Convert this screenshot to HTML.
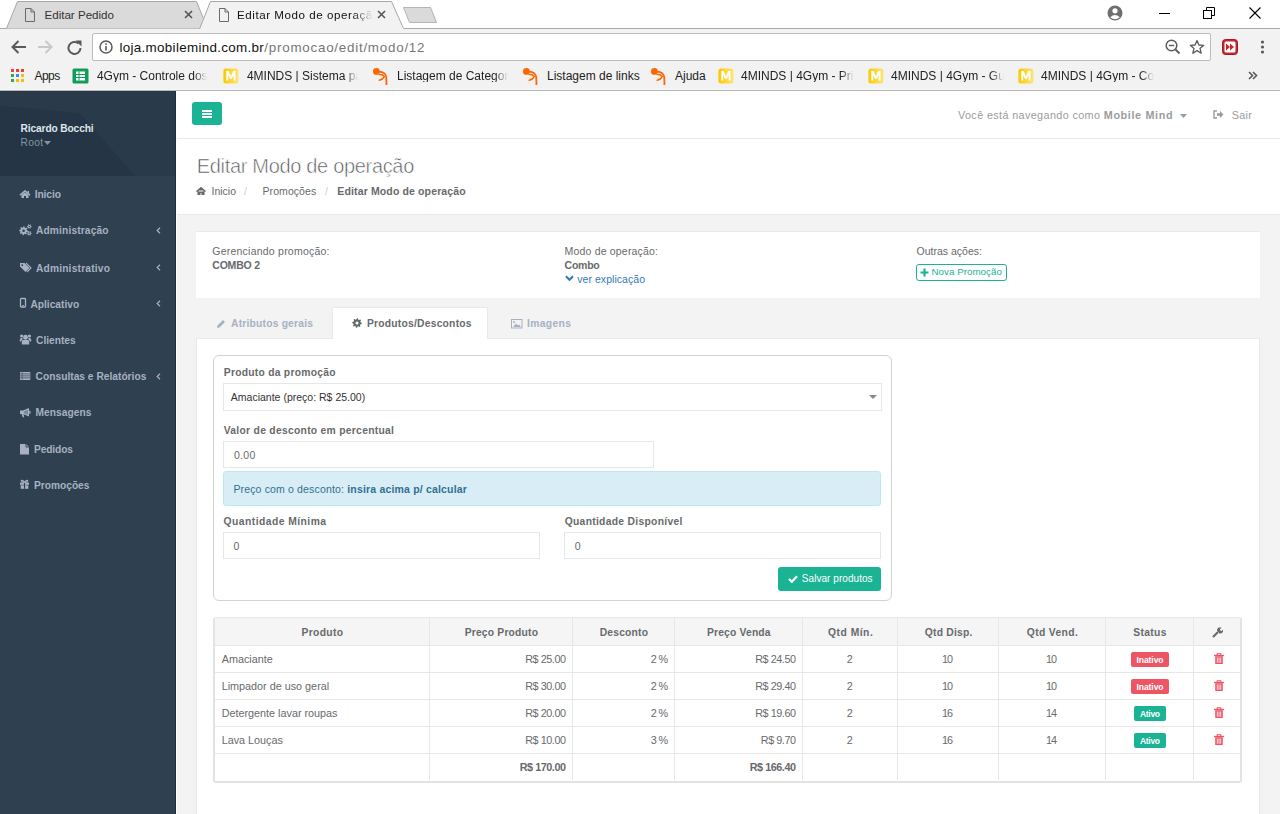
<!DOCTYPE html><html><head><meta charset="utf-8"><style>
html,body{margin:0;padding:0;width:1280px;height:814px;overflow:hidden;background:#fff;position:relative}
.t{position:absolute;white-space:nowrap;line-height:1;font-family:"Liberation Sans",sans-serif}
.r{position:absolute;display:block}
</style></head><body>
<div class="r" style="left:0px;top:0px;width:1280px;height:29px;background:#fff"></div>
<div class="r" style="left:0px;top:28px;width:1280px;height:62px;background:#f2f2f2"></div>
<div class="r" style="left:0px;top:28px;width:199px;height:1px;background:#a9a9a9"></div>
<div class="r" style="left:404px;top:28px;width:876px;height:1px;background:#a9a9a9"></div>
<svg class="r" style="left:0px;top:0px;" width="440" height="30" viewBox="0 0 440 30"><path d="M6.5 28.5 L17.5 1.5 L196.5 1.5 L207.5 28.5" fill="#dadada" stroke="#a7a7a7"/><path d="M199.5 29 L210.5 1.5 L391.5 1.5 L403.5 28.5" fill="#f2f2f2" stroke="#a7a7a7"/><rect x="205" y="28" width="193" height="2" fill="#f2f2f2"/><path d="M403.5 7.5 L430.5 7.5 L436.5 22.5 L409.5 22.5 Z" fill="#dadada" stroke="#b4b4b4"/></svg>
<svg class="r" style="left:25px;top:8px;" width="11" height="15" viewBox="0 0 11 15"><path d="M0.5 0.5 H6 L9.5 4 V13.5 H0.5 Z M6 0.5 V4 H9.5" fill="none" stroke="#6a6a6a" stroke-width="1"/></svg>
<svg class="r" style="left:219px;top:8px;" width="11" height="15" viewBox="0 0 11 15"><path d="M0.5 0.5 H6 L9.5 4 V13.5 H0.5 Z M6 0.5 V4 H9.5" fill="none" stroke="#6a6a6a" stroke-width="1"/></svg>
<div class="t" style="left:44.50px;top:8.98px;font-size:11.6px;color:#333;font-weight:normal;letter-spacing:-0.012px;">Editar Pedido</div>
<div class="t" style="left:237px;top:8px;font-size:11.6px;line-height:14px;color:#111;width:136px;letter-spacing:0.55px;overflow:hidden;white-space:nowrap;-webkit-mask-image:linear-gradient(90deg,#000 85%,transparent)">Editar Modo de operação</div>
<svg class="r" style="left:184px;top:10px;" width="9" height="9" viewBox="0 0 9 9"><path d="M1 1 L8 8 M8 1 L1 8" stroke="#555" stroke-width="1.6"/></svg>
<svg class="r" style="left:377px;top:10px;" width="9" height="9" viewBox="0 0 9 9"><path d="M1 1 L8 8 M8 1 L1 8" stroke="#555" stroke-width="1.6"/></svg>
<svg class="r" style="left:1107px;top:5px;" width="17" height="17" viewBox="0 0 17 17"><circle cx="8" cy="8" r="7.5" fill="#6f6f6f"/><circle cx="8" cy="5.8" r="2.6" fill="#fff"/><path d="M3.2 12.3 Q8 7.6 12.8 12.3 Q8 16 3.2 12.3Z" fill="#fff"/></svg>
<div class="r" style="left:1159px;top:13px;width:11px;height:1px;background:#000"></div>
<svg class="r" style="left:1203px;top:7px;" width="12" height="12" viewBox="0 0 12 12"><rect x="0.5" y="3.5" width="8" height="8" fill="none" stroke="#000"/><path d="M3.5 3.5 V0.5 H11.5 V8.5 H8.5" fill="none" stroke="#000"/></svg>
<svg class="r" style="left:1249px;top:7px;" width="12" height="12" viewBox="0 0 12 12"><path d="M0.5 0.5 L11.5 11.5 M11.5 0.5 L0.5 11.5" stroke="#000" stroke-width="1.1"/></svg>
<svg class="r" style="left:10px;top:39px;" width="18" height="16" viewBox="0 0 18 16"><path d="M16 8 H2.5 M8.5 2 L2.5 8 L8.5 14" fill="none" stroke="#5a5a5a" stroke-width="2"/></svg>
<svg class="r" style="left:36px;top:39px;" width="18" height="16" viewBox="0 0 18 16"><path d="M2 8 H15.5 M9.5 2 L15.5 8 L9.5 14" fill="none" stroke="#c8c8c8" stroke-width="2"/></svg>
<svg class="r" style="left:65.5px;top:38.5px;" width="18" height="18" viewBox="0 0 18 18"><path d="M14.5 9 A6 6 0 1 1 12.6 4.6" fill="none" stroke="#5a5a5a" stroke-width="2"/><path d="M9.5 1.5 H15.5 V7.5 Z" fill="#5a5a5a"/></svg>
<div class="r" style="left:92px;top:33px;width:1119px;height:28px;background:#fff;border:1px solid #bdbdbd;border-radius:2px;box-sizing:border-box"></div>
<svg class="r" style="left:99px;top:40px;" width="14" height="14" viewBox="0 0 14 14"><circle cx="7" cy="7" r="6" fill="none" stroke="#5a5a5a" stroke-width="1.5"/><rect x="6.2" y="6" width="1.6" height="4.5" fill="#5a5a5a"/><rect x="6.2" y="3.3" width="1.6" height="1.6" fill="#5a5a5a"/></svg>
<div class="t" style="left:119.50px;top:41.15px;font-size:13.4px;color:#111;font-weight:normal;letter-spacing:0.310px;">loja.mobilemind.com.br</div>
<div class="t" style="left:264.30px;top:41.15px;font-size:13.4px;color:#767676;font-weight:normal;letter-spacing:0.752px;">/promocao/edit/modo/12</div>
<svg class="r" style="left:1165px;top:39px;" width="16" height="16" viewBox="0 0 16 16"><circle cx="6.5" cy="6.5" r="5.3" fill="none" stroke="#5a5a5a" stroke-width="1.5"/><path d="M10.5 10.5 L14.5 14.5" stroke="#5a5a5a" stroke-width="1.8"/><path d="M3.8 6.5 H9.2" stroke="#5a5a5a" stroke-width="1.4"/></svg>
<svg class="r" style="left:1189px;top:39px;" width="16" height="16" viewBox="0 0 16 16"><path d="M8 1.5 L9.9 6 L14.7 6.3 L11 9.4 L12.2 14.2 L8 11.6 L3.8 14.2 L5 9.4 L1.3 6.3 L6.1 6 Z" fill="none" stroke="#5a5a5a" stroke-width="1.3" stroke-linejoin="round"/></svg>
<svg class="r" style="left:1222px;top:39px;" width="16" height="16" viewBox="0 0 16 16"><rect x="0.5" y="0.5" width="15" height="15" rx="3" fill="#c8242b" stroke="#a31a20"/><rect x="2.5" y="2.5" width="11" height="11" rx="1.5" fill="#fff"/><path d="M4 4.5 L8 8 L4 11.5Z M8 4.5 L12 8 L8 11.5Z" fill="#c8242b"/></svg>
<svg class="r" style="left:1260px;top:40px;" width="5" height="14" viewBox="0 0 5 14"><circle cx="2.5" cy="2" r="1.6" fill="#5a5a5a"/><circle cx="2.5" cy="7" r="1.6" fill="#5a5a5a"/><circle cx="2.5" cy="12" r="1.6" fill="#5a5a5a"/></svg>
<svg class="r" style="left:10px;top:68px;" width="15" height="15" viewBox="0 0 15 15"><rect x="1" y="1" width="3" height="3" fill="#ea4335"/><rect x="6" y="1" width="3" height="3" fill="#ea4335"/><rect x="11" y="1" width="3" height="3" fill="#ea4335"/><rect x="1" y="6" width="3" height="3" fill="#34a853"/><rect x="6" y="6" width="3" height="3" fill="#4285f4"/><rect x="11" y="6" width="3" height="3" fill="#fbbc05"/><rect x="1" y="11" width="3" height="3" fill="#34a853"/><rect x="6" y="11" width="3" height="3" fill="#fbbc05"/><rect x="11" y="11" width="3" height="3" fill="#fbbc05"/></svg>
<div class="t" style="left:34.40px;top:70.34px;font-size:12px;color:#222;font-weight:normal;letter-spacing:-0.484px;">Apps</div>
<svg class="r" style="left:72px;top:68px;" width="17" height="16" viewBox="0 0 17 16"><rect x="0.5" y="0.5" width="16" height="15" rx="1.5" fill="#0f9d58"/><rect x="4" y="3.5" width="9" height="9" fill="#fff"/><path d="M4 6.5 H13 M4 9.5 H13 M7 3.5 V12.5" stroke="#0f9d58" stroke-width="1"/></svg>
<svg class="r" style="left:223px;top:68px;" width="17" height="17" viewBox="0 0 17 17"><defs><linearGradient id="yg" x1="0" x2="1"><stop offset="0" stop-color="#fbc900"/><stop offset="1" stop-color="#fde47a"/></linearGradient></defs><rect x="0.4" y="0.4" width="15" height="15" rx="2.5" fill="url(#yg)"/><path d="M3.3 12.6 V3 H5.6 L7.9 8.3 L10.2 3 H12.5 V12.6 H10.6 V7 L8.7 11 H7.1 L5.2 7 V12.6Z" fill="#fff"/></svg>
<div class="t" style="left:246.9px;top:70.34px;font-size:12px;color:#222;width:111px;-webkit-mask-image:linear-gradient(90deg,#000 88%,transparent);overflow:hidden;white-space:nowrap;">4MINDS | Sistema para</div>
<div class="t" style="left:96.9px;top:70.34px;font-size:12px;color:#222;width:110px;-webkit-mask-image:linear-gradient(90deg,#000 88%,transparent);overflow:hidden;white-space:nowrap;">4Gym - Controle dos clientes</div>
<svg class="r" style="left:372px;top:68px;" width="17" height="17" viewBox="0 0 17 17"><circle cx="4.4" cy="3.4" r="3.4" fill="#ff6600"/><path d="M7 3.6 Q13.5 4 14.2 9 Q14.5 13 14.4 16.5" fill="none" stroke="#ff6600" stroke-width="1.8" stroke-linecap="round"/><path d="M7.2 6.6 Q11 6.3 12.3 8.6 Q10.8 11.5 7.2 12.2" fill="none" stroke="#ff6600" stroke-width="1.5" stroke-linecap="round"/></svg>
<div class="t" style="left:397px;top:70.34px;font-size:12px;color:#222;width:111px;-webkit-mask-image:linear-gradient(90deg,#000 88%,transparent);overflow:hidden;white-space:nowrap;">Listagem de Categorias</div>
<svg class="r" style="left:522px;top:68px;" width="17" height="17" viewBox="0 0 17 17"><circle cx="4.4" cy="3.4" r="3.4" fill="#ff6600"/><path d="M7 3.6 Q13.5 4 14.2 9 Q14.5 13 14.4 16.5" fill="none" stroke="#ff6600" stroke-width="1.8" stroke-linecap="round"/><path d="M7.2 6.6 Q11 6.3 12.3 8.6 Q10.8 11.5 7.2 12.2" fill="none" stroke="#ff6600" stroke-width="1.5" stroke-linecap="round"/></svg>
<div class="t" style="left:547px;top:70.34px;font-size:12px;color:#222;width:98px;">Listagem de links</div>
<svg class="r" style="left:650px;top:68px;" width="17" height="17" viewBox="0 0 17 17"><circle cx="4.4" cy="3.4" r="3.4" fill="#ff6600"/><path d="M7 3.6 Q13.5 4 14.2 9 Q14.5 13 14.4 16.5" fill="none" stroke="#ff6600" stroke-width="1.8" stroke-linecap="round"/><path d="M7.2 6.6 Q11 6.3 12.3 8.6 Q10.8 11.5 7.2 12.2" fill="none" stroke="#ff6600" stroke-width="1.5" stroke-linecap="round"/></svg>
<div class="t" style="left:675px;top:70.34px;font-size:12px;color:#222;width:32px;">Ajuda</div>
<svg class="r" style="left:718px;top:68px;" width="17" height="17" viewBox="0 0 17 17"><defs><linearGradient id="yg" x1="0" x2="1"><stop offset="0" stop-color="#fbc900"/><stop offset="1" stop-color="#fde47a"/></linearGradient></defs><rect x="0.4" y="0.4" width="15" height="15" rx="2.5" fill="url(#yg)"/><path d="M3.3 12.6 V3 H5.6 L7.9 8.3 L10.2 3 H12.5 V12.6 H10.6 V7 L8.7 11 H7.1 L5.2 7 V12.6Z" fill="#fff"/></svg>
<div class="t" style="left:741px;top:70.34px;font-size:12px;color:#222;width:113px;-webkit-mask-image:linear-gradient(90deg,#000 88%,transparent);overflow:hidden;white-space:nowrap;">4MINDS | 4Gym - Primeiro</div>
<svg class="r" style="left:868px;top:68px;" width="17" height="17" viewBox="0 0 17 17"><defs><linearGradient id="yg" x1="0" x2="1"><stop offset="0" stop-color="#fbc900"/><stop offset="1" stop-color="#fde47a"/></linearGradient></defs><rect x="0.4" y="0.4" width="15" height="15" rx="2.5" fill="url(#yg)"/><path d="M3.3 12.6 V3 H5.6 L7.9 8.3 L10.2 3 H12.5 V12.6 H10.6 V7 L8.7 11 H7.1 L5.2 7 V12.6Z" fill="#fff"/></svg>
<div class="t" style="left:891px;top:70.34px;font-size:12px;color:#222;width:113px;-webkit-mask-image:linear-gradient(90deg,#000 88%,transparent);overflow:hidden;white-space:nowrap;">4MINDS | 4Gym - Guia</div>
<svg class="r" style="left:1018px;top:68px;" width="17" height="17" viewBox="0 0 17 17"><defs><linearGradient id="yg" x1="0" x2="1"><stop offset="0" stop-color="#fbc900"/><stop offset="1" stop-color="#fde47a"/></linearGradient></defs><rect x="0.4" y="0.4" width="15" height="15" rx="2.5" fill="url(#yg)"/><path d="M3.3 12.6 V3 H5.6 L7.9 8.3 L10.2 3 H12.5 V12.6 H10.6 V7 L8.7 11 H7.1 L5.2 7 V12.6Z" fill="#fff"/></svg>
<div class="t" style="left:1041px;top:70.34px;font-size:12px;color:#222;width:113px;-webkit-mask-image:linear-gradient(90deg,#000 88%,transparent);overflow:hidden;white-space:nowrap;">4MINDS | 4Gym - Como</div>
<svg class="r" style="left:1248px;top:71px;" width="10" height="9" viewBox="0 0 10 9"><path d="M1 1 L4.5 4.5 L1 8 M5 1 L8.5 4.5 L5 8" fill="none" stroke="#5a5a5a" stroke-width="1.6"/></svg>
<div class="r" style="left:0px;top:89px;width:1280px;height:1px;background:#f7f7f7"></div>
<div class="r" style="left:0px;top:90px;width:1280px;height:1px;background:#b6b6b6"></div>
<div class="r" style="left:0px;top:91px;width:176px;height:723px;background:#2f4050"></div>
<svg class="r" style="left:0px;top:91px;" width="176" height="85" viewBox="0 0 176 85"><rect width="176" height="85" fill="#283848"/><path d="M0 15 Q40 18 80 22 L135 85 L0 85Z" fill="#253545"/><path d="M80 22 L95 0 L176 0 L176 85 L135 85Z" fill="#293a4a"/><path d="M0 0 H95 L80 22 Q40 18 0 15Z" fill="#2a3a4a"/></svg>
<div class="r" style="left:175px;top:91px;width:1px;height:723px;background:#1f2d3b"></div>
<div class="t" style="left:20.60px;top:124.16px;font-size:10.2px;color:#dfe4ed;font-weight:bold;letter-spacing:-0.132px;">Ricardo Bocchi</div>
<div class="t" style="left:20.60px;top:138.26px;font-size:10.2px;color:#8095a8;font-weight:normal;letter-spacing:0.285px;">Root</div>
<svg class="r" style="left:44px;top:141px;" width="7" height="4" viewBox="0 0 7 4"><path d="M0 0 H7 L3.5 4Z" fill="#8095a8"/></svg>
<div class="t" style="left:34.70px;top:190.16px;font-size:10.2px;color:#a7b1c2;font-weight:bold;letter-spacing:-0.067px;">Inicio</div>
<svg class="r" style="left:19px;top:190px;" width="12" height="9" viewBox="0 0 12 9"><path d="M1 5.2 L6 1 L11 5.2" fill="none" stroke="#a7b1c2" stroke-width="1.6"/><path d="M8.5 1 H10 V3.5 L8.5 2.3Z" fill="#a7b1c2"/><path d="M2.5 5 L6 2.2 L9.5 5 V8 H7 V6 H5 V8 H2.5Z" fill="#a7b1c2"/></svg>
<div class="t" style="left:36.00px;top:226.36px;font-size:10.2px;color:#a7b1c2;font-weight:bold;letter-spacing:0.146px;">Administração</div>
<svg class="r" style="left:19px;top:224px;" width="13" height="12" viewBox="0 0 13 12"><polygon points="9.10,6.80 9.01,7.68 7.65,8.06 7.34,8.63 7.78,9.98 7.10,10.54 5.86,9.85 5.24,10.04 4.60,11.30 3.72,11.21 3.34,9.85 2.77,9.54 1.42,9.98 0.86,9.30 1.55,8.06 1.36,7.44 0.10,6.80 0.19,5.92 1.55,5.54 1.86,4.97 1.42,3.62 2.10,3.06 3.34,3.75 3.96,3.56 4.60,2.30 5.48,2.39 5.86,3.75 6.43,4.06 7.78,3.62 8.34,4.30 7.65,5.54 7.84,6.16" fill="#a7b1c2"/><circle cx="4.6" cy="6.8" r="1.3" fill="#2f4050"/><polygon points="12.70,2.50 12.62,3.12 11.69,3.30 11.43,3.63 11.50,4.58 10.92,4.82 10.30,4.10 9.89,4.05 9.10,4.58 8.60,4.20 8.91,3.30 8.75,2.91 7.90,2.50 7.98,1.88 8.91,1.70 9.17,1.37 9.10,0.42 9.68,0.18 10.30,0.90 10.71,0.95 11.50,0.42 12.00,0.80 11.69,1.70 11.85,2.09" fill="#a7b1c2"/><circle cx="10.3" cy="2.5" r="0.7" fill="#2f4050"/><polygon points="12.70,9.30 12.62,9.92 11.69,10.10 11.43,10.43 11.50,11.38 10.92,11.62 10.30,10.90 9.89,10.85 9.10,11.38 8.60,11.00 8.91,10.10 8.75,9.71 7.90,9.30 7.98,8.68 8.91,8.50 9.17,8.17 9.10,7.22 9.68,6.98 10.30,7.70 10.71,7.75 11.50,7.22 12.00,7.60 11.69,8.50 11.85,8.89" fill="#a7b1c2"/><circle cx="10.3" cy="9.3" r="0.7" fill="#2f4050"/></svg>
<div class="t" style="left:35.90px;top:263.76px;font-size:10.2px;color:#a7b1c2;font-weight:bold;letter-spacing:0.207px;">Administrativo</div>
<svg class="r" style="left:19px;top:262px;" width="13" height="11" viewBox="0 0 13 11"><path d="M1 1 H5.5 L10.5 6 L6.5 10 L1 4.5Z" fill="#a7b1c2"/><circle cx="3.2" cy="3.2" r="0.9" fill="#2f4050"/><path d="M7 1 L12 6 L8 10" fill="none" stroke="#a7b1c2" stroke-width="1.1"/></svg>
<div class="t" style="left:30.40px;top:299.66px;font-size:10.2px;color:#a7b1c2;font-weight:bold;letter-spacing:0.006px;">Aplicativo</div>
<svg class="r" style="left:19px;top:297px;" width="8" height="11" viewBox="0 0 8 11"><rect x="1.5" y="1.5" width="5" height="8.5" rx="0.8" fill="none" stroke="#a7b1c2" stroke-width="1.3"/><rect x="3" y="8.2" width="2" height="1" fill="#a7b1c2"/></svg>
<div class="t" style="left:36.10px;top:335.56px;font-size:10.2px;color:#a7b1c2;font-weight:bold;letter-spacing:-0.011px;">Clientes</div>
<svg class="r" style="left:19px;top:333px;" width="13" height="12" viewBox="0 0 13 12"><circle cx="6.5" cy="4.2" r="2.4" fill="#a7b1c2"/><circle cx="2.6" cy="3" r="1.6" fill="#a7b1c2"/><circle cx="10.4" cy="3" r="1.6" fill="#a7b1c2"/><path d="M2.8 11.5 V9 Q2.8 6.6 6.5 6.6 Q10.2 6.6 10.2 9 V11.5Z" fill="#a7b1c2"/><path d="M0.8 8.5 V6.5 Q0.8 5 2.6 5 Q3.8 5 4.3 5.8 Q2.5 6.5 2.3 8.5Z M12.2 8.5 V6.5 Q12.2 5 10.4 5 Q9.2 5 8.7 5.8 Q10.5 6.5 10.7 8.5Z" fill="#a7b1c2"/></svg>
<div class="t" style="left:35.60px;top:372.16px;font-size:10.2px;color:#a7b1c2;font-weight:bold;letter-spacing:0.018px;">Consultas e Relatórios</div>
<svg class="r" style="left:19px;top:371px;" width="12" height="10" viewBox="0 0 12 10"><rect x="1" y="1" width="10.3" height="8" fill="#a7b1c2"/><path d="M1 2.9 H11.3 M1 4.9 H11.3 M1 6.9 H11.3" stroke="#2f4050" stroke-width="0.7"/><path d="M3.2 1 V9" stroke="#2f4050" stroke-width="0.5"/></svg>
<div class="t" style="left:35.40px;top:408.36px;font-size:10.2px;color:#a7b1c2;font-weight:bold;letter-spacing:0.081px;">Mensagens</div>
<svg class="r" style="left:19px;top:407px;" width="12" height="11" viewBox="0 0 12 11"><path d="M1 3.5 H4 L10 1 V9.5 L4 7 H1Z" fill="#a7b1c2"/><path d="M2.5 7 L3.7 10.3 H5.2 L4.6 7.2Z" fill="#a7b1c2"/><rect x="10.2" y="3.8" width="1.3" height="3" fill="#a7b1c2"/><path d="M5 4.3 L9 2.8 V7.7 L5 6.2Z" fill="#2f4050" opacity="0.35"/></svg>
<div class="t" style="left:34.00px;top:445.36px;font-size:10.2px;color:#a7b1c2;font-weight:bold;letter-spacing:-0.113px;">Pedidos</div>
<svg class="r" style="left:19px;top:443px;" width="11" height="12" viewBox="0 0 11 12"><path d="M1 1 H7 L10 4 V11.6 H1Z" fill="#a7b1c2"/><path d="M7 1 V4 H10" fill="none" stroke="#2f4050" stroke-width="0.9"/></svg>
<div class="t" style="left:34.00px;top:481.36px;font-size:10.2px;color:#a7b1c2;font-weight:bold;letter-spacing:-0.007px;">Promoções</div>
<svg class="r" style="left:19px;top:479px;" width="11" height="10" viewBox="0 0 11 10"><rect x="1" y="3.5" width="9" height="2.3" fill="#a7b1c2"/><rect x="1.7" y="6.3" width="7.6" height="3.5" fill="#a7b1c2"/><path d="M5.5 3.5 V9.8" stroke="#2f4050" stroke-width="1.1"/><path d="M5.5 3.4 Q3.5 0.5 2.3 1.5 Q1.8 2.8 5.5 3.4 Q7.5 0.5 8.7 1.5 Q9.2 2.8 5.5 3.4" fill="none" stroke="#a7b1c2" stroke-width="1.1"/></svg>
<svg class="r" style="left:156px;top:227px;" width="5" height="7" viewBox="0 0 5 7"><path d="M4 0.8 L1.2 3.5 L4 6.2" fill="none" stroke="#a7b1c2" stroke-width="1.2"/></svg>
<svg class="r" style="left:156px;top:264px;" width="5" height="7" viewBox="0 0 5 7"><path d="M4 0.8 L1.2 3.5 L4 6.2" fill="none" stroke="#a7b1c2" stroke-width="1.2"/></svg>
<svg class="r" style="left:156px;top:300px;" width="5" height="7" viewBox="0 0 5 7"><path d="M4 0.8 L1.2 3.5 L4 6.2" fill="none" stroke="#a7b1c2" stroke-width="1.2"/></svg>
<svg class="r" style="left:156px;top:373px;" width="5" height="7" viewBox="0 0 5 7"><path d="M4 0.8 L1.2 3.5 L4 6.2" fill="none" stroke="#a7b1c2" stroke-width="1.2"/></svg>
<div class="r" style="left:176px;top:91px;width:1104px;height:723px;background:#f3f3f4"></div>
<div class="r" style="left:176px;top:91px;width:1104px;height:47px;background:#fff"></div>
<div class="r" style="left:177px;top:138px;width:1103px;height:1px;background:#e7eaec"></div>
<div class="r" style="left:176px;top:139px;width:1104px;height:75px;background:#fff"></div>
<div class="r" style="left:177px;top:214px;width:1103px;height:1px;background:#e7eaec"></div>
<div class="r" style="left:176px;top:91px;width:1px;height:723px;background:#fff"></div>
<div class="r" style="left:192px;top:102px;width:30px;height:23px;background:#1ab394;border-radius:3px"></div>
<div class="r" style="left:202px;top:110px;width:10px;height:2px;background:#fff"></div>
<div class="r" style="left:202px;top:113px;width:10px;height:2px;background:#fff"></div>
<div class="r" style="left:202px;top:116px;width:10px;height:2px;background:#fff"></div>
<div class="t" style="left:958.00px;top:110.11px;font-size:10.8px;color:#999c9e;font-weight:normal;letter-spacing:0.378px;">Você está navegando como</div>
<div class="t" style="left:1103.75px;top:110.11px;font-size:10.8px;color:#999c9e;font-weight:bold;letter-spacing:0.636px;">Mobile Mind</div>
<svg class="r" style="left:1180px;top:114px;" width="7" height="4" viewBox="0 0 7 4"><path d="M0 0 H7 L3.5 4Z" fill="#999c9e"/></svg>
<svg class="r" style="left:1213px;top:110px;" width="11" height="9" viewBox="0 0 11 9"><path d="M4 1 H1 V8 H4" fill="none" stroke="#999c9e" stroke-width="1.4"/><path d="M4 3.2 H7 V1 L10.5 4.5 L7 8 V5.8 H4Z" fill="#999c9e"/></svg>
<div class="t" style="left:1231.75px;top:110.11px;font-size:10.8px;color:#999c9e;font-weight:normal;letter-spacing:0.264px;">Sair</div>
<div class="t" style="left:196.80px;top:156.17px;font-size:20px;color:#505355;font-weight:normal;letter-spacing:-0.323px;-webkit-text-stroke:0.6px #fff;">Editar Modo de operação</div>
<svg class="r" style="left:196px;top:186px;" width="10" height="9" viewBox="0 0 10 9"><path d="M0.5 5.5 L5 1.5 L9.5 5.5 M2 4.5 V9 H4 V6.5 H6 V9 H8 V4.5" fill="#676a6c" stroke="#676a6c" stroke-width="1.1"/></svg>
<div class="t" style="left:211.50px;top:186.01px;font-size:10.5px;color:#676a6c;font-weight:normal;letter-spacing:-0.003px;">Inicio</div>
<div class="t" style="left:244.00px;top:186.01px;font-size:10.5px;color:#cccccc;font-weight:normal;letter-spacing:0.000px;">/</div>
<div class="t" style="left:262.50px;top:186.01px;font-size:10.5px;color:#676a6c;font-weight:normal;letter-spacing:0.074px;">Promoções</div>
<div class="t" style="left:325.00px;top:186.01px;font-size:10.5px;color:#cccccc;font-weight:normal;letter-spacing:0.000px;">/</div>
<div class="t" style="left:337.30px;top:186.01px;font-size:10.5px;color:#676a6c;font-weight:bold;letter-spacing:0.135px;">Editar Modo de operação</div>
<div class="r" style="left:196px;top:231px;width:1064px;height:67px;background:#fff;border-top:1px solid #e7eaec;box-sizing:border-box"></div>
<div class="t" style="left:212.30px;top:246.11px;font-size:10.5px;color:#676a6c;font-weight:normal;letter-spacing:0.227px;">Gerenciando promoção:</div>
<div class="t" style="left:212.30px;top:259.91px;font-size:10.5px;color:#676a6c;font-weight:bold;letter-spacing:-0.217px;">COMBO 2</div>
<div class="t" style="left:564.60px;top:246.11px;font-size:10.5px;color:#676a6c;font-weight:normal;letter-spacing:0.182px;">Modo de operação:</div>
<div class="t" style="left:564.60px;top:259.91px;font-size:10.5px;color:#676a6c;font-weight:bold;letter-spacing:-0.253px;">Combo</div>
<svg class="r" style="left:565px;top:275px;" width="9" height="7" viewBox="0 0 9 7"><path d="M1 1.2 L4.5 4.8 L8 1.2" fill="none" stroke="#337ab7" stroke-width="2"/></svg>
<div class="t" style="left:577.25px;top:273.61px;font-size:10.5px;color:#337ab7;font-weight:normal;letter-spacing:0.049px;">ver explicação</div>
<div class="t" style="left:916.50px;top:246.11px;font-size:10.5px;color:#676a6c;font-weight:normal;letter-spacing:0.003px;">Outras ações:</div>
<div class="r" style="left:916px;top:264px;width:91px;height:17px;border:1px solid #1ab394;border-radius:3px;box-sizing:border-box"></div>
<svg class="r" style="left:920px;top:268px;" width="9" height="9" viewBox="0 0 9 9"><path d="M4.5 0.5 V8.5 M0.5 4.5 H8.5" stroke="#1ab394" stroke-width="2.2"/></svg>
<div class="t" style="left:931.50px;top:266.90px;font-size:9.8px;color:#1ab394;font-weight:normal;letter-spacing:0.011px;">Nova Promoção</div>
<div class="r" style="left:332px;top:307px;width:156px;height:32px;background:#fff;border:1px solid #e7eaec;border-bottom:none;box-sizing:border-box;border-radius:2px 2px 0 0"></div>
<svg class="r" style="left:216px;top:319px;" width="10" height="10" viewBox="0 0 10 10"><path d="M1 9 L1.5 6.5 L7 1 L9 3 L3.5 8.5Z" fill="#a7b1c2"/></svg>
<div class="t" style="left:231.00px;top:319.08px;font-size:10.3px;color:#a7b1c2;font-weight:bold;letter-spacing:0.201px;">Atributos gerais</div>
<svg class="r" style="left:352px;top:318px;" width="10" height="10" viewBox="0 0 10 10"><polygon points="9.80,5.00 9.71,5.94 8.33,6.38 7.99,7.00 8.39,8.39 7.67,8.99 6.38,8.33 5.70,8.53 5.00,9.80 4.06,9.71 3.62,8.33 3.00,7.99 1.61,8.39 1.01,7.67 1.67,6.38 1.47,5.70 0.20,5.00 0.29,4.06 1.67,3.62 2.01,3.00 1.61,1.61 2.33,1.01 3.62,1.67 4.30,1.47 5.00,0.20 5.94,0.29 6.38,1.67 7.00,2.01 8.39,1.61 8.99,2.33 8.33,3.62 8.53,4.30" fill="#676a6c"/><circle cx="5" cy="5" r="1.5" fill="#fff"/></svg>
<div class="t" style="left:366.90px;top:319.08px;font-size:10.3px;color:#676a6c;font-weight:bold;letter-spacing:0.234px;">Produtos/Descontos</div>
<svg class="r" style="left:511px;top:319px;" width="12" height="10" viewBox="0 0 12 10"><rect x="0.5" y="0.5" width="10.5" height="8.5" fill="none" stroke="#a7b1c2" stroke-width="1"/><path d="M2 8 L5 4.5 L7 6.5 L8 5.5 L10 8Z" fill="#a7b1c2"/><circle cx="3" cy="3" r="1" fill="#a7b1c2"/></svg>
<div class="t" style="left:527.00px;top:319.08px;font-size:10.3px;color:#a7b1c2;font-weight:bold;letter-spacing:0.368px;">Imagens</div>
<div class="r" style="left:196px;top:338px;width:1064px;height:477px;background:#fff;border:1px solid #e7eaec;box-sizing:border-box"></div>
<div class="r" style="left:333px;top:338px;width:154px;height:1px;background:#fff"></div>
<div class="r" style="left:213px;top:355px;width:679px;height:246px;border:1px solid #d2d2d2;border-radius:6px;box-sizing:border-box"></div>
<div class="t" style="left:223.75px;top:367.88px;font-size:10.3px;color:#676a6c;font-weight:bold;letter-spacing:0.263px;">Produto da promoção</div>
<div class="r" style="left:223px;top:383px;width:659px;height:28px;border:1px solid #e5e6e7;box-sizing:border-box"></div>
<div class="t" style="left:230.80px;top:391.91px;font-size:10.5px;color:#333;font-weight:normal;letter-spacing:0.006px;">Amaciante (preço: R$ 25.00)</div>
<svg class="r" style="left:869px;top:395px;" width="8" height="4" viewBox="0 0 8 4"><path d="M0 0 H8 L4 4Z" fill="#888"/></svg>
<div class="t" style="left:223.75px;top:426.48px;font-size:10.3px;color:#676a6c;font-weight:bold;letter-spacing:0.294px;">Valor de desconto em percentual</div>
<div class="r" style="left:223px;top:441px;width:431px;height:27px;border:1px solid #e5e6e7;box-sizing:border-box"></div>
<div class="t" style="left:233.90px;top:449.71px;font-size:10.5px;color:#676a6c;font-weight:normal;letter-spacing:0.321px;">0.00</div>
<div class="r" style="left:223px;top:471px;width:658px;height:35px;background:#d9edf7;border:1px solid #bce8f1;border-radius:3px;box-sizing:border-box"></div>
<div class="t" style="left:233.40px;top:484.11px;font-size:10.5px;color:#31708f;font-weight:normal;letter-spacing:0.155px;">Preço com o desconto:</div>
<div class="t" style="left:347.20px;top:484.11px;font-size:10.5px;color:#31708f;font-weight:bold;letter-spacing:0.180px;">insira acima p/ calcular</div>
<div class="t" style="left:223.60px;top:517.28px;font-size:10.3px;color:#676a6c;font-weight:bold;letter-spacing:0.463px;">Quantidade Mínima</div>
<div class="t" style="left:564.70px;top:517.28px;font-size:10.3px;color:#676a6c;font-weight:bold;letter-spacing:0.305px;">Quantidade Disponível</div>
<div class="r" style="left:223px;top:532px;width:317px;height:27px;border:1px solid #e5e6e7;box-sizing:border-box"></div>
<div class="r" style="left:564px;top:532px;width:317px;height:27px;border:1px solid #e5e6e7;box-sizing:border-box"></div>
<div class="t" style="left:233.40px;top:541.01px;font-size:10.5px;color:#676a6c;font-weight:normal;letter-spacing:0.000px;">0</div>
<div class="t" style="left:574.80px;top:541.01px;font-size:10.5px;color:#676a6c;font-weight:normal;letter-spacing:0.000px;">0</div>
<div class="r" style="left:778px;top:567px;width:103px;height:24px;background:#1ab394;border-radius:3px"></div>
<svg class="r" style="left:788px;top:575px;" width="10" height="8" viewBox="0 0 10 8"><path d="M1 4 L3.8 6.8 L9 1.3" fill="none" stroke="#fff" stroke-width="2.2"/></svg>
<div class="t" style="left:801.80px;top:574.03px;font-size:10px;color:#fff;font-weight:normal;letter-spacing:0.054px;">Salvar produtos</div>
<div class="r" style="left:213px;top:617px;width:1029px;height:166px;border:2px solid #e3e3e3;border-top:1px solid #e7e7e7;border-radius:3px;box-sizing:border-box;background:#fff"></div>
<div class="r" style="left:215px;top:618px;width:1025px;height:27px;background:#f5f5f6"></div>
<div class="r" style="left:429px;top:618px;width:1px;height:162px;background:#e7e7e7"></div>
<div class="r" style="left:572px;top:618px;width:1px;height:162px;background:#e7e7e7"></div>
<div class="r" style="left:674px;top:618px;width:1px;height:162px;background:#e7e7e7"></div>
<div class="r" style="left:802px;top:618px;width:1px;height:162px;background:#e7e7e7"></div>
<div class="r" style="left:897px;top:618px;width:1px;height:162px;background:#e7e7e7"></div>
<div class="r" style="left:998px;top:618px;width:1px;height:162px;background:#e7e7e7"></div>
<div class="r" style="left:1105px;top:618px;width:1px;height:162px;background:#e7e7e7"></div>
<div class="r" style="left:1193px;top:618px;width:1px;height:162px;background:#e7e7e7"></div>
<div class="r" style="left:215px;top:645px;width:1025px;height:1px;background:#e7e7e7"></div>
<div class="r" style="left:215px;top:672px;width:1025px;height:1px;background:#e7e7e7"></div>
<div class="r" style="left:215px;top:699px;width:1025px;height:1px;background:#e7e7e7"></div>
<div class="r" style="left:215px;top:726px;width:1025px;height:1px;background:#e7e7e7"></div>
<div class="r" style="left:215px;top:753px;width:1025px;height:1px;background:#e7e7e7"></div>
<div class="t" style="left:301.60px;top:628.08px;font-size:10.3px;color:#676a6c;font-weight:bold;letter-spacing:0.321px;">Produto</div>
<div class="t" style="left:464.70px;top:628.08px;font-size:10.3px;color:#676a6c;font-weight:bold;letter-spacing:0.195px;">Preço Produto</div>
<div class="t" style="left:599.70px;top:628.08px;font-size:10.3px;color:#676a6c;font-weight:bold;letter-spacing:0.196px;">Desconto</div>
<div class="t" style="left:706.90px;top:628.08px;font-size:10.3px;color:#676a6c;font-weight:bold;letter-spacing:0.187px;">Preço Venda</div>
<div class="t" style="left:828.00px;top:628.08px;font-size:10.3px;color:#676a6c;font-weight:bold;letter-spacing:0.516px;">Qtd Mín.</div>
<div class="t" style="left:924.80px;top:628.08px;font-size:10.3px;color:#676a6c;font-weight:bold;letter-spacing:0.215px;">Qtd Disp.</div>
<div class="t" style="left:1026.80px;top:628.08px;font-size:10.3px;color:#676a6c;font-weight:bold;letter-spacing:0.366px;">Qtd Vend.</div>
<div class="t" style="left:1133.30px;top:628.08px;font-size:10.3px;color:#676a6c;font-weight:bold;letter-spacing:0.324px;">Status</div>
<svg class="r" style="left:1212px;top:627px;" width="11" height="11" viewBox="0 0 11 11"><path d="M1 10 L6 5" stroke="#676a6c" stroke-width="2.2"/><path d="M5 3.5 A3 3 0 0 1 9.5 0.8 L7.8 2.6 L8.5 3.5 L9.5 4.2 L11 2.5 A3 3 0 0 1 7.5 6.5Z" fill="#676a6c"/></svg>
<div class="t" style="left:221.70px;top:653.96px;font-size:10.8px;color:#676a6c;font-weight:normal;letter-spacing:0.000px;">Amaciante</div>
<div class="t" style="left:525.23px;top:653.96px;font-size:10.8px;color:#676a6c;font-weight:normal;letter-spacing:-0.438px;">R$ 25.00</div>
<div class="t" style="left:650.69px;top:653.96px;font-size:10.8px;color:#676a6c;font-weight:normal;letter-spacing:-0.651px;">2 %</div>
<div class="t" style="left:755.23px;top:653.96px;font-size:10.8px;color:#676a6c;font-weight:normal;letter-spacing:-0.438px;">R$ 24.50</div>
<div class="t" style="left:846.71px;top:653.96px;font-size:10.8px;color:#676a6c;font-weight:normal;letter-spacing:0.000px;">2</div>
<div class="t" style="left:941.91px;top:653.96px;font-size:10.8px;color:#676a6c;font-weight:normal;letter-spacing:-0.841px;">10</div>
<div class="t" style="left:1045.91px;top:653.96px;font-size:10.8px;color:#676a6c;font-weight:normal;letter-spacing:-0.841px;">10</div>
<div class="r" style="left:1131px;top:652px;width:38px;height:15px;background:#ed5565;border-radius:2px"></div>
<div class="t" style="left:1136.50px;top:656.10px;font-size:8.5px;color:#fff;font-weight:bold;letter-spacing:-0.066px;">Inativo</div>
<svg class="r" style="left:1214px;top:653px;" width="10" height="12" viewBox="0 0 10 12"><rect x="0" y="1.8" width="10" height="1.4" fill="#ed5565"/><path d="M3.2 2 V0.7 H6.8 V2" fill="none" stroke="#ed5565" stroke-width="1.1"/><path d="M1.2 3.2 H8.8 V10.4 Q8.8 11 8.2 11 H1.8 Q1.2 11 1.2 10.4Z" fill="#ed5565"/><path d="M3.3 4.5 V9.8 M5 4.5 V9.8 M6.7 4.5 V9.8" stroke="#fff" stroke-width="0.8"/></svg>
<div class="t" style="left:221.70px;top:680.96px;font-size:10.8px;color:#676a6c;font-weight:normal;letter-spacing:0.000px;">Limpador de uso geral</div>
<div class="t" style="left:525.23px;top:680.96px;font-size:10.8px;color:#676a6c;font-weight:normal;letter-spacing:-0.438px;">R$ 30.00</div>
<div class="t" style="left:650.69px;top:680.96px;font-size:10.8px;color:#676a6c;font-weight:normal;letter-spacing:-0.651px;">2 %</div>
<div class="t" style="left:755.23px;top:680.96px;font-size:10.8px;color:#676a6c;font-weight:normal;letter-spacing:-0.438px;">R$ 29.40</div>
<div class="t" style="left:846.71px;top:680.96px;font-size:10.8px;color:#676a6c;font-weight:normal;letter-spacing:0.000px;">2</div>
<div class="t" style="left:941.91px;top:680.96px;font-size:10.8px;color:#676a6c;font-weight:normal;letter-spacing:-0.841px;">10</div>
<div class="t" style="left:1045.91px;top:680.96px;font-size:10.8px;color:#676a6c;font-weight:normal;letter-spacing:-0.841px;">10</div>
<div class="r" style="left:1131px;top:679px;width:38px;height:15px;background:#ed5565;border-radius:2px"></div>
<div class="t" style="left:1136.50px;top:683.10px;font-size:8.5px;color:#fff;font-weight:bold;letter-spacing:-0.066px;">Inativo</div>
<svg class="r" style="left:1214px;top:680px;" width="10" height="12" viewBox="0 0 10 12"><rect x="0" y="1.8" width="10" height="1.4" fill="#ed5565"/><path d="M3.2 2 V0.7 H6.8 V2" fill="none" stroke="#ed5565" stroke-width="1.1"/><path d="M1.2 3.2 H8.8 V10.4 Q8.8 11 8.2 11 H1.8 Q1.2 11 1.2 10.4Z" fill="#ed5565"/><path d="M3.3 4.5 V9.8 M5 4.5 V9.8 M6.7 4.5 V9.8" stroke="#fff" stroke-width="0.8"/></svg>
<div class="t" style="left:221.70px;top:707.96px;font-size:10.8px;color:#676a6c;font-weight:normal;letter-spacing:0.000px;">Detergente lavar roupas</div>
<div class="t" style="left:525.23px;top:707.96px;font-size:10.8px;color:#676a6c;font-weight:normal;letter-spacing:-0.438px;">R$ 20.00</div>
<div class="t" style="left:650.69px;top:707.96px;font-size:10.8px;color:#676a6c;font-weight:normal;letter-spacing:-0.651px;">2 %</div>
<div class="t" style="left:755.23px;top:707.96px;font-size:10.8px;color:#676a6c;font-weight:normal;letter-spacing:-0.438px;">R$ 19.60</div>
<div class="t" style="left:846.71px;top:707.96px;font-size:10.8px;color:#676a6c;font-weight:normal;letter-spacing:0.000px;">2</div>
<div class="t" style="left:941.91px;top:707.96px;font-size:10.8px;color:#676a6c;font-weight:normal;letter-spacing:-0.841px;">16</div>
<div class="t" style="left:1045.91px;top:707.96px;font-size:10.8px;color:#676a6c;font-weight:normal;letter-spacing:-0.841px;">14</div>
<div class="r" style="left:1134px;top:706px;width:32px;height:15px;background:#1ab394;border-radius:2px"></div>
<div class="t" style="left:1140.00px;top:710.10px;font-size:8.5px;color:#fff;font-weight:bold;letter-spacing:-0.313px;">Ativo</div>
<svg class="r" style="left:1214px;top:707px;" width="10" height="12" viewBox="0 0 10 12"><rect x="0" y="1.8" width="10" height="1.4" fill="#ed5565"/><path d="M3.2 2 V0.7 H6.8 V2" fill="none" stroke="#ed5565" stroke-width="1.1"/><path d="M1.2 3.2 H8.8 V10.4 Q8.8 11 8.2 11 H1.8 Q1.2 11 1.2 10.4Z" fill="#ed5565"/><path d="M3.3 4.5 V9.8 M5 4.5 V9.8 M6.7 4.5 V9.8" stroke="#fff" stroke-width="0.8"/></svg>
<div class="t" style="left:221.70px;top:734.96px;font-size:10.8px;color:#676a6c;font-weight:normal;letter-spacing:0.000px;">Lava Louças</div>
<div class="t" style="left:525.23px;top:734.96px;font-size:10.8px;color:#676a6c;font-weight:normal;letter-spacing:-0.438px;">R$ 10.00</div>
<div class="t" style="left:650.69px;top:734.96px;font-size:10.8px;color:#676a6c;font-weight:normal;letter-spacing:-0.651px;">3 %</div>
<div class="t" style="left:760.82px;top:734.96px;font-size:10.8px;color:#676a6c;font-weight:normal;letter-spacing:-0.441px;">R$ 9.70</div>
<div class="t" style="left:846.71px;top:734.96px;font-size:10.8px;color:#676a6c;font-weight:normal;letter-spacing:0.000px;">2</div>
<div class="t" style="left:941.91px;top:734.96px;font-size:10.8px;color:#676a6c;font-weight:normal;letter-spacing:-0.841px;">16</div>
<div class="t" style="left:1045.91px;top:734.96px;font-size:10.8px;color:#676a6c;font-weight:normal;letter-spacing:-0.841px;">14</div>
<div class="r" style="left:1134px;top:733px;width:32px;height:15px;background:#1ab394;border-radius:2px"></div>
<div class="t" style="left:1140.00px;top:737.10px;font-size:8.5px;color:#fff;font-weight:bold;letter-spacing:-0.313px;">Ativo</div>
<svg class="r" style="left:1214px;top:734px;" width="10" height="12" viewBox="0 0 10 12"><rect x="0" y="1.8" width="10" height="1.4" fill="#ed5565"/><path d="M3.2 2 V0.7 H6.8 V2" fill="none" stroke="#ed5565" stroke-width="1.1"/><path d="M1.2 3.2 H8.8 V10.4 Q8.8 11 8.2 11 H1.8 Q1.2 11 1.2 10.4Z" fill="#ed5565"/><path d="M3.3 4.5 V9.8 M5 4.5 V9.8 M6.7 4.5 V9.8" stroke="#fff" stroke-width="0.8"/></svg>
<div class="t" style="left:519.65px;top:762.16px;font-size:10.8px;color:#676a6c;font-weight:bold;letter-spacing:-0.436px;">R$ 170.00</div>
<div class="t" style="left:749.65px;top:762.16px;font-size:10.8px;color:#676a6c;font-weight:bold;letter-spacing:-0.436px;">R$ 166.40</div>
</body></html>
